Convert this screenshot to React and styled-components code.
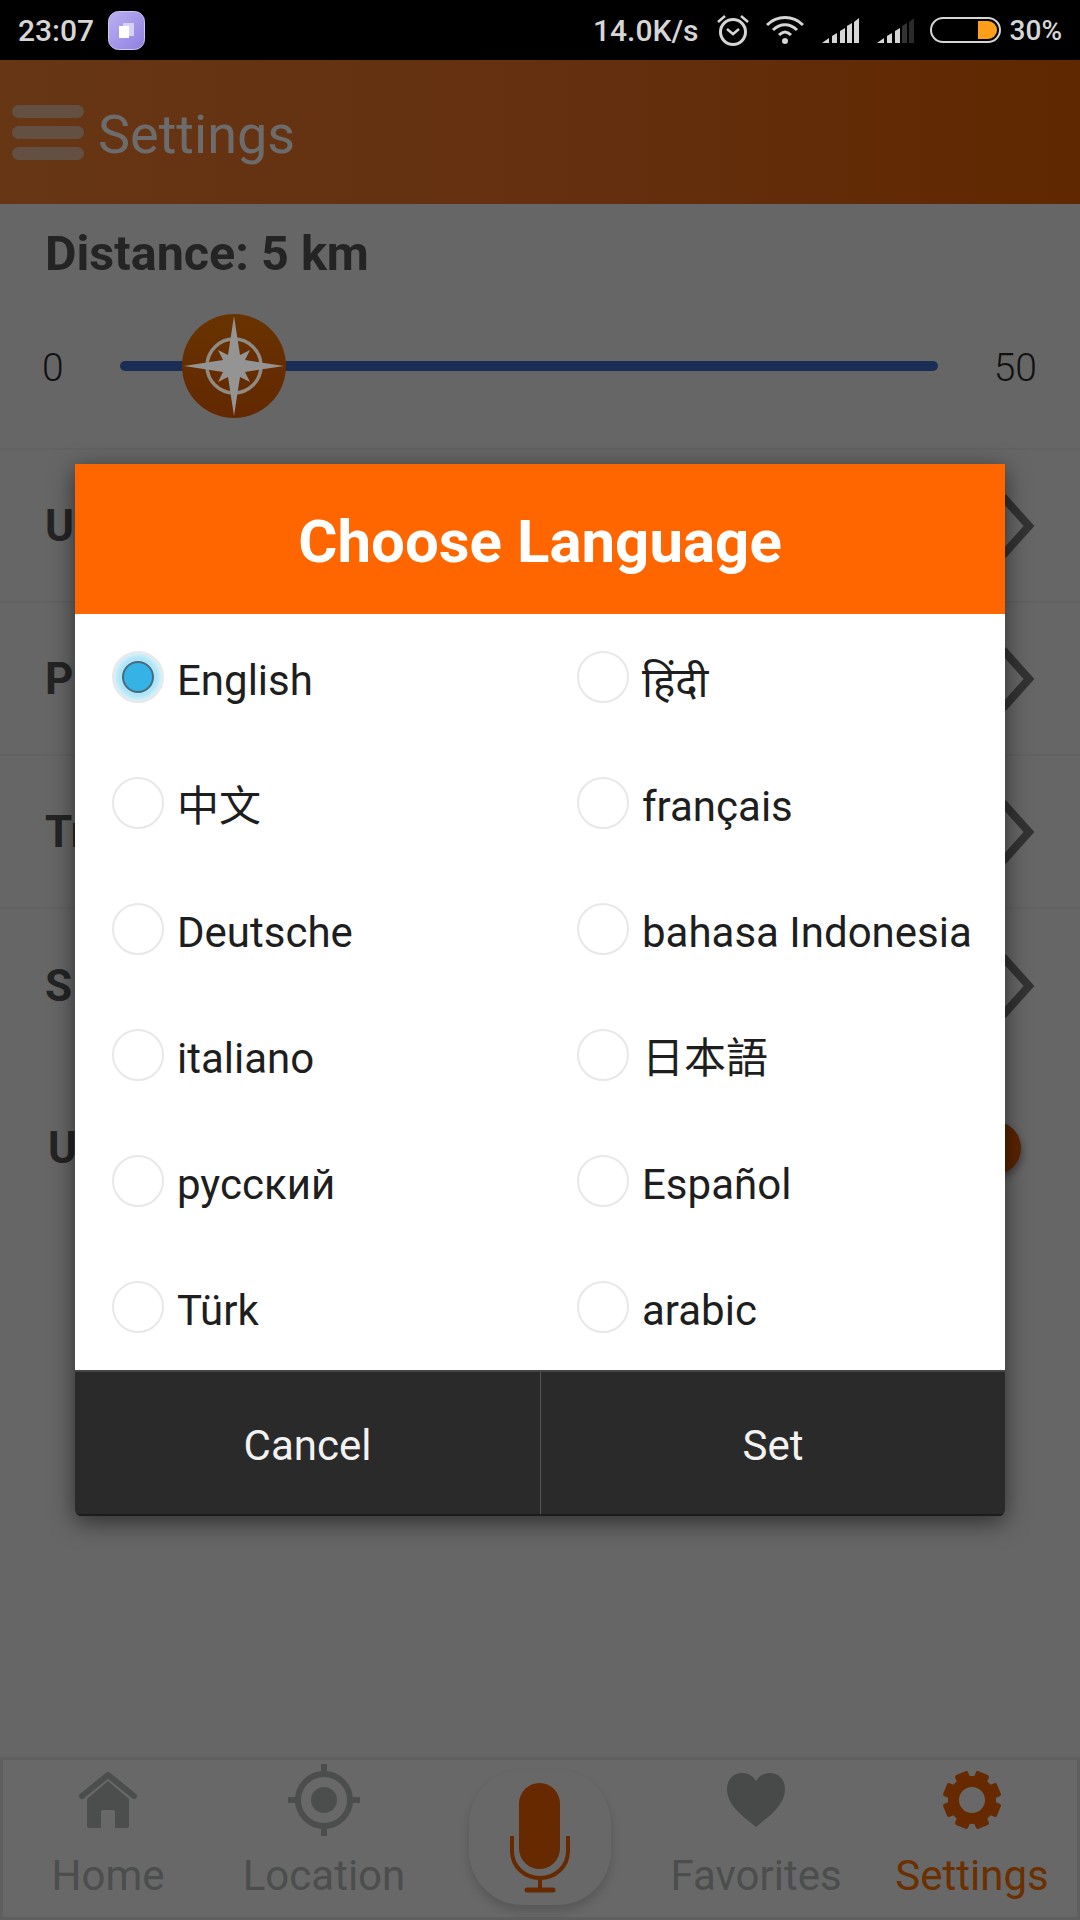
import React from 'react';
import styled, { createGlobalStyle } from 'styled-components';

const Global = createGlobalStyle`
  html, body { margin: 0; padding: 0; background: #666; }
  * { box-sizing: border-box; }
  body { font-family: Roboto, "Noto Sans", "Noto Sans CJK SC", sans-serif; }
`;

const Page = styled.div`
  position: relative;
  width: 1080px;
  height: 1920px;
  overflow: hidden;
  display: flex;
  flex-direction: column;
  background: #666;
`;

const StatusBar = styled.div`
  height: 60px;
  flex: none;
  background: #000;
  color: #d6d6d6;
  display: flex;
  align-items: center;
  padding: 0 18px;
  font-size: 30px;
  font-weight: 500;
`;
const StatusLeft = styled.div`
  display: flex;
  align-items: center;
  gap: 14px;
`;
const StatusRight = styled.div`
  margin-left: auto;
  display: flex;
  align-items: center;
  gap: 0;
`;
const Percent = styled.span`
  font-size: 28px;
`;
const Icon = styled.svg`
  display: block;
  flex: none;
  margin-left: ${p => p.$ml || 0}px;
`;
const Battery = styled.div`
  position: relative;
  width: 71px;
  height: 26px;
  margin: 0 9px 0 16px;
  border: 2px solid #d6d6d6;
  border-radius: 13px;
  display: flex;
  justify-content: flex-end;
  padding: 2px;
`;
const BatteryFill = styled.div`
  width: 19px;
  height: 18px;
  background: #ff9e1b;
  border-radius: 0 9px 9px 0;
`;

const Header = styled.div`
  height: 144px;
  flex: none;
  background: linear-gradient(90deg, #673614 0%, #643010 50%, #602800 100%);
  display: flex;
  align-items: center;
  padding-left: 12px;
`;
const Burger = styled.div`
  width: 72px;
  display: flex;
  flex-direction: column;
  gap: 8px;
`;
const BurgerBar = styled.div`
  height: 13px;
  border-radius: 7px;
  background: #635043;
`;
const HeaderTitle = styled.div`
  margin-left: 14px;
  margin-top: 4px;
  font-size: 54px;
  color: #6c6c6c;
`;

const DistanceBlock = styled.div`
  height: 246px;
  flex: none;
  padding: 25px 34px 0 42px;
  border-bottom: 2px solid #626262;
`;
const DistanceTitle = styled.div`
  margin-left: 3px;
  font-size: 48.5px;
  line-height: 50px;
  font-weight: 700;
  color: #242424;
`;
const SliderRow = styled.div`
  margin-top: 35px;
  height: 104px;
  display: flex;
  align-items: center;
`;
const SliderLabel = styled.div`
  font-size: 39px;
  font-weight: 300;
  color: #111;
  width: ${p => p.$w}px;
  text-align: ${p => p.$align};
  margin-top: 3px;
`;
const Track = styled.div`
  position: relative;
  width: 818px;
  height: 10px;
  background: #1a2d55;
  border-radius: 5px;
`;
const Thumb = styled.svg`
  position: absolute;
  left: 62px;
  top: -47px;
`;

const SettingRow = styled.div`
  height: ${p => p.$h || 153}px;
  flex: none;
  display: flex;
  align-items: center;
  justify-content: space-between;
  padding: 0 45px 0 ${p => p.$pl || 45}px;
  border-bottom: ${p => (p.$line ? '2px solid #626262' : 'none')};
`;
const RowLabel = styled.div`
  font-size: 44px;
  font-weight: 700;
  color: #242424;
`;
const Knob = styled.div`
  width: 54px;
  height: 54px;
  border-radius: 50%;
  margin-right: 14px;
  background: #5a2400;
  box-shadow: 2px 4px 6px rgba(0, 0, 0, .3);
`;

const Spacer = styled.div`
  flex: 1;
`;

const Nav = styled.div`
  height: 163px;
  flex: none;
  position: relative;
  background: #686868;
  box-shadow: inset 0 0 0 3px #5f5f5f;
  display: grid;
  grid-template-columns: repeat(5, 1fr);
`;
const NavItem = styled.div`
  display: flex;
  flex-direction: column;
  align-items: center;
  padding-top: 7px;
  font-size: 42px;
  color: ${p => (p.$active ? '#6b2f00' : '#4c4e4d')};
`;
const NavIconBox = styled.div`
  height: 72px;
  display: flex;
  align-items: center;
  justify-content: center;
`;
const NavLabel = styled.div`
  line-height: 47px;
  margin-top: 16px;
`;
const MicWrap = styled.div`
  display: flex;
  justify-content: center;
  padding-top: 13px;
`;
const MicButton = styled.div`
  width: 142px;
  height: 135px;
  border-radius: 54px;
  background: #686868;
  box-shadow: 0 6px 10px rgba(0, 0, 0, .16);
  display: flex;
  align-items: center;
  justify-content: center;
`;

const Dialog = styled.div`
  position: absolute;
  left: 75px;
  top: 464px;
  width: 930px;
  display: flex;
  flex-direction: column;
  border-radius: 0 0 6px 6px;
  box-shadow: 0 6px 24px rgba(0, 0, 0, .55);
  overflow: hidden;
`;
const DialogHead = styled.div`
  height: 150px;
  padding-top: 5px;
  background: #ff6600;
  color: #fff;
  font-size: 60px;
  font-weight: 700;
  display: flex;
  align-items: center;
  justify-content: center;
`;
const Options = styled.div`
  background: #fff;
  display: grid;
  grid-template-columns: 465px 465px;
  grid-auto-rows: 126px;
`;
const Option = styled.div`
  display: flex;
  align-items: center;
  padding-left: 37px;
  gap: 13px;
  color: #1e1e1e;
  font-size: 42px;
  font-family: Roboto, "Noto Sans", "Noto Sans Devanagari", "Noto Sans CJK SC", sans-serif;
`;
const OptionText = styled.span`
  margin-top: ${p => (p.$cjk ? -2 : 6)}px;
`;
const Radio = styled.div`
  width: 52px;
  height: 52px;
  flex: none;
  border-radius: 50%;
  border: 2px solid #e8e8e8;
  display: flex;
  align-items: center;
  justify-content: center;
  background: ${p => (p.$on ? 'radial-gradient(circle, #b0e5f7 55%, #e3f5fb 75%, #f5f8fa 100%)' : '#fff')};
`;
const RadioDot = styled.div`
  width: 32px;
  height: 32px;
  border-radius: 50%;
  background: #35b2e6;
  border: 2px solid #4a6a7a;
`;
const DialogFoot = styled.div`
  height: 146px;
  background: #2a2a2a;
  border-top: 2px solid #444;
  border-bottom: 2px solid #1c1c1c;
  display: grid;
  grid-template-columns: 465px 1fr;
`;
const FootButton = styled.div`
  display: flex;
  align-items: center;
  justify-content: center;
  padding-top: 4px;
  color: #f2f2f2;
  font-size: 42px;
  border-left: ${p => (p.$sep ? '1px solid #555' : 'none')};
`;

const Chevron = () => (
  <Icon width="34" height="66" viewBox="0 0 34 66" fill="none">
    <path d="M2 4 L28 33 L2 62" stroke="#333" strokeWidth="8" />
  </Icon>
);

const AppBadge = () => (
  <Icon width="37" height="39" viewBox="0 0 37 39">
    <defs>
      <linearGradient id="bg" x1="0" y1="0" x2="1" y2="1">
        <stop offset="0" stopColor="#bcb0f2" />
        <stop offset="1" stopColor="#8f7fe0" />
      </linearGradient>
    </defs>
    <rect x="0.5" y="0.5" width="36" height="38" rx="10" fill="url(#bg)" stroke="#cfc8f5" />
    <rect x="15" y="12" width="11" height="13" fill="#d8d2fa" />
    <rect x="11" y="15" width="10" height="12" fill="#fff" />
  </Icon>
);

const Alarm = () => (
  <Icon width="32" height="34" viewBox="0 0 32 34" fill="none" stroke="#d6d6d6" $ml={18}>
    <circle cx="16" cy="19" r="12.5" strokeWidth="3" />
    <path d="M10 16 L16 21 L22 16" strokeWidth="2.5" />
    <path d="M1 9 L8 3 M31 9 L24 3" strokeWidth="2.5" />
  </Icon>
);

const Wifi = () => (
  <Icon width="38" height="30" viewBox="0 0 38 30" fill="none" stroke="#d6d6d6" $ml={17}>
    <path d="M1 10 C11 0 27 0 37 10" strokeWidth="3" />
    <path d="M7 15 C14 8 24 8 31 15" strokeWidth="3" />
    <path d="M13 20 C17 16 21 16 25 20" strokeWidth="3" />
    <circle cx="19" cy="26" r="3" fill="#d6d6d6" stroke="none" />
  </Icon>
);

const Signal = ({ dim, ml }) => (
  <Icon width="37" height="26" viewBox="0 0 37 26" $ml={ml}>
    <path d="M0 26 L7 21 L7 26 Z" fill="#d6d6d6" />
    <path d="M10 19 L15 16 L15 26 L10 26 Z" fill="#d6d6d6" />
    <path d="M18 14 L23 11 L23 26 L18 26 Z" fill={dim > 2 ? '#333' : '#d6d6d6'} />
    <path d="M25 9 L30 6 L30 26 L25 26 Z" fill={dim > 1 ? '#333' : '#d6d6d6'} />
    <path d="M32 5 L37 1 L37 26 L32 26 Z" fill={dim > 0 ? '#2a2a2a' : '#d6d6d6'} />
  </Icon>
);

const Compass = () => (
  <Thumb width="104" height="104" viewBox="-52 -52 104 104">
    <defs>
      <linearGradient id="cmp" x1="0" y1="0" x2="0" y2="1">
        <stop offset="0" stopColor="#693300" />
        <stop offset="1" stopColor="#632800" />
      </linearGradient>
    </defs>
    <circle r="52" fill="url(#cmp)" />
    <circle r="27" fill="none" stroke="#8e8a84" strokeWidth="3.5" />
    <path
      d="M0 -50 L6 -11 L16 -16 L11 -6 L50 0 L11 6 L16 16 L6 11 L0 50 L-6 11 L-16 16 L-11 6 L-50 0 L-11 -6 L-16 -16 L-6 -11 Z"
      fill="#949494"
    />
  </Thumb>
);

const HomeIcon = () => (
  <svg width="58" height="56" viewBox="0 0 58 56" fill="#4c4e4d">
    <path d="M3 24 L29 3 L55 24" fill="none" stroke="#4c4e4d" strokeWidth="6" strokeLinecap="round" strokeLinejoin="round" />
    <path d="M8 27 L29 9 L50 27 L50 54 Q50 56 48 56 L36 56 L36 40 Q36 38 34 38 L24 38 Q22 38 22 40 L22 56 L10 56 Q8 56 8 54 Z" />
  </svg>
);

const TargetIcon = () => (
  <svg width="72" height="72" viewBox="0 0 72 72" fill="none" stroke="#4c4e4d">
    <circle cx="36" cy="36" r="26" strokeWidth="6" />
    <circle cx="36" cy="36" r="13" fill="#4c4e4d" stroke="none" />
    <path d="M36 0 V12 M36 60 V72 M0 36 H12 M60 36 H72" strokeWidth="6" />
  </svg>
);

const HeartIcon = () => (
  <svg width="60" height="54" viewBox="0 0 58 54" fill="#484a49">
    <path d="M29 54 C20 46 0 34 0 16 C0 6 7 0 15 0 C21 0 26 3 29 8 C32 3 37 0 43 0 C51 0 58 6 58 16 C58 34 38 46 29 54 Z" />
  </svg>
);

const GearIcon = () => {
  const teeth = [0, 45, 90, 135, 180, 225, 270, 315];
  return (
    <svg width="58" height="58" viewBox="-29 -29 58 58" fill="#662900">
      {teeth.map(a => (
        <rect key={a} x="-7" y="-29" width="14" height="10" rx="2" transform={`rotate(${a + 22.5})`} />
      ))}
      <circle r="18.5" fill="none" stroke="#662900" strokeWidth="11" />
    </svg>
  );
};

const MicIcon = () => (
  <svg width="62" height="110" viewBox="0 0 62 110" fill="none" stroke="#662900">
    <rect x="10" y="0" width="41" height="86" rx="20.5" fill="#662900" stroke="none" />
    <path d="M3 53 V68 C3 84 16 95 31 95 C46 95 59 84 59 68 V53" strokeWidth="4" />
    <path d="M31 95 V107" strokeWidth="4" />
    <path d="M18 107 H44" strokeWidth="5" strokeLinecap="round" />
  </svg>
);

const languages = [
  ['English', 'हिंदी'],
  ['中文', 'français'],
  ['Deutsche', 'bahasa Indonesia'],
  ['italiano', '日本語'],
  ['русский', 'Español'],
  ['Türk', 'arabic'],
];

const isCjk = text => /[\u3040-\u30ff\u4e00-\u9fff]/.test(text);

export default function App() {
  return (
    <Page>
      <Global />
      <StatusBar>
        <StatusLeft>
          <span>23:07</span>
          <AppBadge />
        </StatusLeft>
        <StatusRight>
          <span>14.0K/s</span>
          <Alarm />
          <Wifi />
          <Signal dim={0} ml={18} />
          <Signal dim={2} ml={18} />
          <Battery><BatteryFill /></Battery>
          <Percent>30%</Percent>
        </StatusRight>
      </StatusBar>
      <Header>
        <Burger>
          <BurgerBar />
          <BurgerBar />
          <BurgerBar />
        </Burger>
        <HeaderTitle>Settings</HeaderTitle>
      </Header>
      <DistanceBlock>
        <DistanceTitle>Distance: 5 km</DistanceTitle>
        <SliderRow>
          <SliderLabel $w={78} $align="left">0</SliderLabel>
          <Track><Compass /></Track>
          <SliderLabel $w={99} $align="right">50</SliderLabel>
        </SliderRow>
      </DistanceBlock>
      <SettingRow $line><RowLabel>U</RowLabel><Chevron /></SettingRow>
      <SettingRow $line><RowLabel>P</RowLabel><Chevron /></SettingRow>
      <SettingRow $line><RowLabel>Tr</RowLabel><Chevron /></SettingRow>
      <SettingRow><RowLabel>S</RowLabel><Chevron /></SettingRow>
      <SettingRow $pl={48} $h={172}><RowLabel>U</RowLabel><Knob /></SettingRow>
      <Spacer />
      <Nav>
        <NavItem>
          <NavIconBox><HomeIcon /></NavIconBox>
          <NavLabel>Home</NavLabel>
        </NavItem>
        <NavItem>
          <NavIconBox><TargetIcon /></NavIconBox>
          <NavLabel>Location</NavLabel>
        </NavItem>
        <MicWrap>
          <MicButton><MicIcon /></MicButton>
        </MicWrap>
        <NavItem>
          <NavIconBox><HeartIcon /></NavIconBox>
          <NavLabel>Favorites</NavLabel>
        </NavItem>
        <NavItem $active>
          <NavIconBox><GearIcon /></NavIconBox>
          <NavLabel>Settings</NavLabel>
        </NavItem>
      </Nav>
      <Dialog>
        <DialogHead>Choose Language</DialogHead>
        <Options>
          {languages.flat().map((lang, i) => (
            <Option key={lang}>
              <Radio $on={i === 0}>{i === 0 && <RadioDot />}</Radio>
              <OptionText $cjk={isCjk(lang)}>{lang}</OptionText>
            </Option>
          ))}
        </Options>
        <DialogFoot>
          <FootButton>Cancel</FootButton>
          <FootButton $sep>Set</FootButton>
        </DialogFoot>
      </Dialog>
    </Page>
  );
}
